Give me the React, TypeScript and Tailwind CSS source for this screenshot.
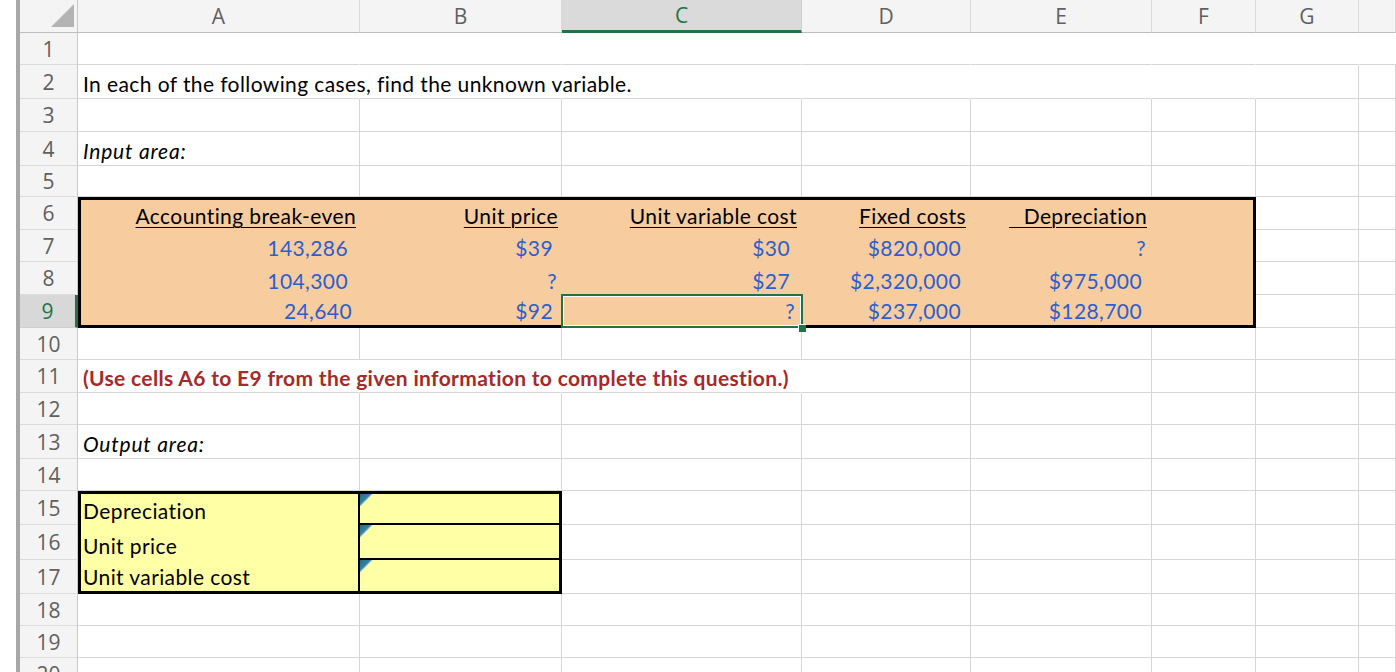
import React from 'react';

const COLS = ['A', 'B', 'C', 'D', 'E', 'F', 'G', 'H'];

const HEAD_FONT = "[font-family:'Open_Sans','Noto_Sans',sans-serif] text-[21px] font-normal tracking-normal";
const BODY_FONT = "[font-family:Lato,'Liberation_Sans',sans-serif] text-[21px] leading-[25px] tracking-[0.4px] text-black";

const blue = 'text-[#2b5fcf]';
const ul = 'underline decoration-1 underline-offset-[3px]';
const inCell = 'flex items-end justify-end pb-[2px] whitespace-nowrap';

function Tri({ id }: { id: string }) {
  return (
    <svg width="13" height="13" viewBox="0 0 13 13" className="block shrink-0">
      <defs>
        <linearGradient id={id} x1="0" y1="0" x2="1" y2="1">
          <stop offset="0" stopColor="#246b85" />
          <stop offset="0.4" stopColor="#3684a0" />
          <stop offset="0.5" stopColor="#cfe5ee" />
        </linearGradient>
      </defs>
      <polygon points="0,0 13,0 0,13" fill={`url(#${id})`} />
    </svg>
  );
}

function InputBox() {
  return (
    <div className="col-start-2 col-end-8 row-start-7 row-end-11 grid grid-cols-subgrid grid-rows-subgrid border-[3px] border-black bg-[#f7cc9f]">
      {/* row 6 */}
      <div className={`${inCell} pr-[4px]`}><span className={ul}>Accounting break-even</span></div>
      <div className={`${inCell} pr-[4px]`}><span className={ul}>Unit price</span></div>
      <div className={`${inCell} pr-[5px]`}><span className={ul}>Unit variable cost</span></div>
      <div className={`${inCell} pr-[5px]`}><span className={ul}>Fixed costs</span></div>
      <div className={`${inCell} pr-[5px]`}><span className={ul}>{'\u00a0\u00a0\u2009Depreciation'}</span></div>
      <div />
      {/* row 7 */}
      <div className={`${inCell} ${blue} pr-[12px]`}>143,286</div>
      <div className={`${inCell} ${blue} pr-[9px]`}>$39</div>
      <div className={`${inCell} ${blue} pr-[12px]`}>$30</div>
      <div className={`${inCell} ${blue} pr-[10px]`}>$820,000</div>
      <div className={`${inCell} ${blue} pr-[6px]`}>?</div>
      <div />
      {/* row 8 */}
      <div className={`${inCell} ${blue} pr-[12px]`}>104,300</div>
      <div className={`${inCell} ${blue} pr-[5px]`}>?</div>
      <div className={`${inCell} ${blue} pr-[12px]`}>$27</div>
      <div className={`${inCell} ${blue} pr-[10px]`}>$2,320,000</div>
      <div className={`${inCell} ${blue} pr-[10px]`}>$975,000</div>
      <div />
      {/* row 9 */}
      <div className={`${inCell} ${blue} pr-[8px]`}>24,640</div>
      <div className={`${inCell} ${blue} pr-[9px]`}>$92</div>
      <div className={`${inCell} ${blue} pr-[7px] relative`}>
        ?
        <div className="pointer-events-none absolute -left-px -top-px -right-px -bottom-[3px] border-2 border-[#217346] shadow-[inset_0_0_0_1px_#ffffff]" />
        <div className="absolute -right-[4px] -bottom-[7px] w-[8px] h-[8px] bg-[#217346] border-l border-t border-white" />
      </div>
      <div className={`${inCell} ${blue} pr-[10px]`}>$237,000</div>
      <div className={`${inCell} ${blue} pr-[10px]`}>$128,700</div>
      <div />
    </div>
  );
}

function OutputBox() {
  const label = 'flex items-end pl-[2px] pb-[2px] whitespace-nowrap border-r-2 border-black';
  return (
    <div className="col-start-2 col-end-4 row-start-16 row-end-19 grid grid-cols-subgrid grid-rows-subgrid border-[3px] border-black bg-[#ffffa6]">
      <div className={label}>Depreciation</div>
      <div className="flex items-start border-b-2 border-black"><Tri id="t1" /></div>
      <div className={label}>Unit price</div>
      <div className="flex items-start border-b-2 border-black"><Tri id="t2" /></div>
      <div className={label}>Unit variable cost</div>
      <div className="flex items-start"><Tri id="t3" /></div>
    </div>
  );
}

type Spec = { text?: React.ReactNode; cls?: string; noR?: boolean };

function rowSpecs(r: number): Record<number, Spec> {
  const s: Record<number, Spec> = {};
  if (r === 1) {
    for (let i = 0; i < 8; i++) s[i] = { noR: true };
  }
  if (r === 2) {
    s[0] = { text: 'In each of the following cases, find the unknown variable.', noR: true };
    for (let i = 1; i < 6; i++) s[i] = { noR: true };
  }
  if (r === 4) s[0] = { text: 'Input area:', cls: 'italic tracking-[0.8px]' };
  if (r === 11) {
    s[0] = {
      text: '(Use cells A6 to E9 from the given information to complete this question.)',
      cls: 'font-bold text-[#a52a2a] tracking-[0.33px]',
      noR: true,
    };
    s[1] = { noR: true };
    s[2] = { noR: true };
  }
  if (r === 13) s[0] = { text: 'Output area:', cls: 'italic tracking-[0.8px]' };
  return s;
}

export default function App() {
  const cells: React.ReactNode[] = [];

  cells.push(
    <div key="corner" className="flex items-end justify-end pr-[3px] pb-[5px] bg-[#f4f4f4] border-r border-r-[#c8c8c8] border-b border-b-[#bdbdbd]">
      <svg width="23" height="23" viewBox="0 0 23 23" className="block">
        <polygon points="0,23 23,23 23,0" fill="#b4b4b4" />
      </svg>
    </div>
  );
  COLS.forEach((c) => {
    const active = c === 'C';
    cells.push(
      <div
        key={'h' + c}
        className={
          active
            ? `flex items-center justify-center bg-[#dadada] text-[#217346] border-r border-r-[#d0d0d0] border-b-[3px] border-b-[#217346] ${HEAD_FONT}`
            : `flex items-center justify-center bg-[#f4f4f4] text-[#606060] border-r border-r-[#dadada] border-b border-b-[#bdbdbd] ${HEAD_FONT}`
        }
      >
        {c === 'H' ? '' : c}
      </div>
    );
  });

  for (let r = 1; r <= 20; r++) {
    const active = r === 9;
    cells.push(
      <div
        key={'rh' + r}
        className={
          active
            ? `flex items-center justify-center pt-[1px] bg-[#d8d8d8] text-[#217346] border-r-[3px] border-r-[#217346] border-b border-b-[#cfcfcf] ${HEAD_FONT}`
            : `flex items-center justify-center pt-[1px] bg-[#f4f4f4] text-[#606060] border-r border-r-[#c8c8c8] border-b border-b-[#dcdcdc] ${HEAD_FONT}`
        }
      >
        {r}
      </div>
    );
    if (r === 6) cells.push(<InputBox key="inbox" />);
    if (r === 15) cells.push(<OutputBox key="outbox" />);
    const start = r >= 6 && r <= 9 ? 6 : r >= 15 && r <= 17 ? 2 : 0;
    const specs = rowSpecs(r);
    for (let ci = start; ci < 8; ci++) {
      const sp = specs[ci] || {};
      cells.push(
        <div
          key={`c${r}-${ci}`}
          className={`flex items-end pl-[5px] pb-[2px] whitespace-nowrap min-w-0 border-b border-b-[#d6d6d6] border-r ${
            sp.noR ? 'border-r-transparent' : 'border-r-[#d6d6d6]'
          } ${sp.cls || ''}`}
        >
          {sp.text}
        </div>
      );
    }
  }

  return (
    <div className={`flex h-[672px] w-[1396px] overflow-hidden bg-white ${BODY_FONT}`}>
      <div className="w-[16px] shrink-0 bg-white" />
      <div className="w-[4px] shrink-0 bg-[#a8a8a8]" />
      <div className="grid flex-1 grid-cols-[58px_282px_202px_240px_169px_181px_104px_103px_1fr] grid-rows-[33px_32px_34px_33px_34px_31px_33px_32px_33px_33px_32px_33px_32px_34px_32px_34px_35px_34px_32px_32px_33px]">
        {cells}
      </div>
    </div>
  );
}
